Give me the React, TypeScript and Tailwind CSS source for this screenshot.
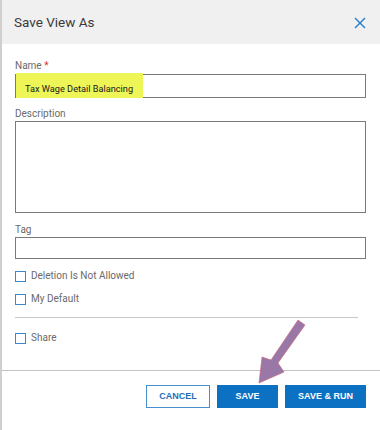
import { useState } from 'react';

const Checkbox = ({ label }: { label: string }) => {
  const [checked, setChecked] = useState(false);
  return (
    <label className="flex items-center gap-[5px] cursor-pointer">
      <span
        onClick={() => setChecked(!checked)}
        className={`w-[11px] h-[11px] border border-[#3c86c9] ${checked ? 'bg-[#0c71c3]' : 'bg-white'}`}
      />
      <span className="text-[10px] leading-[12px] text-[#6a6a6a]">{label}</span>
    </label>
  );
};

export default function App() {
  const [name, setName] = useState('Tax Wage Detail Balancing');

  return (
    <div
      className="relative w-[380px] h-[430px] bg-white border-l-2 border-[#cfcfcf] overflow-hidden"
      style={{ fontFamily: 'Roboto, "Liberation Sans", sans-serif' }}
    >
      {/* 헤더 */}
      <div className="h-[44px] bg-[#f0f0f0] flex items-center justify-between pl-[12px] pr-[14px]">
        <span className="text-[13.5px] text-[#3a3a3a]">Save View As</span>
        <svg width="12" height="12" viewBox="0 0 12 12" className="mt-[1px]">
          <path d="M1 1 L11 11 M11 1 L1 11" stroke="#1e7cc8" strokeWidth="1.4" />
        </svg>
      </div>

      <div className="pl-[13px] pr-[14px]">
        <div className="mt-[16px] text-[10px] leading-[12px] text-[#6a6a6a]">
          Name <span className="text-[#e0302a]">*</span>
        </div>
        <div className="relative mt-[2px] h-[24px] border border-[#7a7a7a]">
          <span className="absolute left-0 top-[-2px] w-[127px] h-[25px] bg-[#eef557]" />
          <input
            value={name}
            onChange={(e) => setName(e.target.value)}
            className="relative w-full h-full pl-[9px] text-[9.2px] text-[#1a1a1a] bg-transparent outline-none"
          />
        </div>

        <div className="mt-[10px] text-[10px] leading-[12px] text-[#6a6a6a]">Description</div>
        <textarea className="block mt-[1px] w-full h-[92px] border border-[#7a7a7a] resize-none outline-none" />

        <div className="mt-[11px] text-[10px] leading-[12px] text-[#6a6a6a]">Tag</div>
        <input className="block mt-[1px] w-full h-[22px] border border-[#7a7a7a] outline-none" />

        <div className="mt-[11px] flex flex-col gap-[11px]">
          <Checkbox label="Deletion Is Not Allowed" />
          <Checkbox label="My Default" />
        </div>

        <div className="mt-[12px] mr-[8px] h-px bg-[#c8c8c8]" />

        <div className="mt-[14px]">
          <Checkbox label="Share" />
        </div>
      </div>

      {/* 하단 버튼 */}
      <div className="mt-[26px] h-px bg-[#c4c4c4]" />
      <div
        className="flex justify-end gap-[7px] pr-[14px] mt-[14px]"
        style={{ fontFamily: '"Liberation Sans", Arial, sans-serif' }}
      >
        <button className="w-[64px] h-[23px] border border-[#4a90cf] text-[#1f6fb8] text-[9px] font-bold">CANCEL</button>
        <button className="w-[61px] h-[23px] bg-[#0c71c3] text-white text-[9px] font-bold">SAVE</button>
        <button className="w-[81px] h-[23px] bg-[#0c71c3] text-white text-[9px] font-bold">SAVE &amp; RUN</button>
      </div>

      {/* 화살표 */}
      <svg className="absolute left-0 top-0 pointer-events-none" width="380" height="430">
        <path
          d="M296 320 L303 325 L276 363 L282 372 L257 383 L260 357 L269 360 Z"
          fill="#9978a8"
          stroke="#d06070"
          strokeWidth="0.6"
        />
      </svg>
    </div>
  );
}
